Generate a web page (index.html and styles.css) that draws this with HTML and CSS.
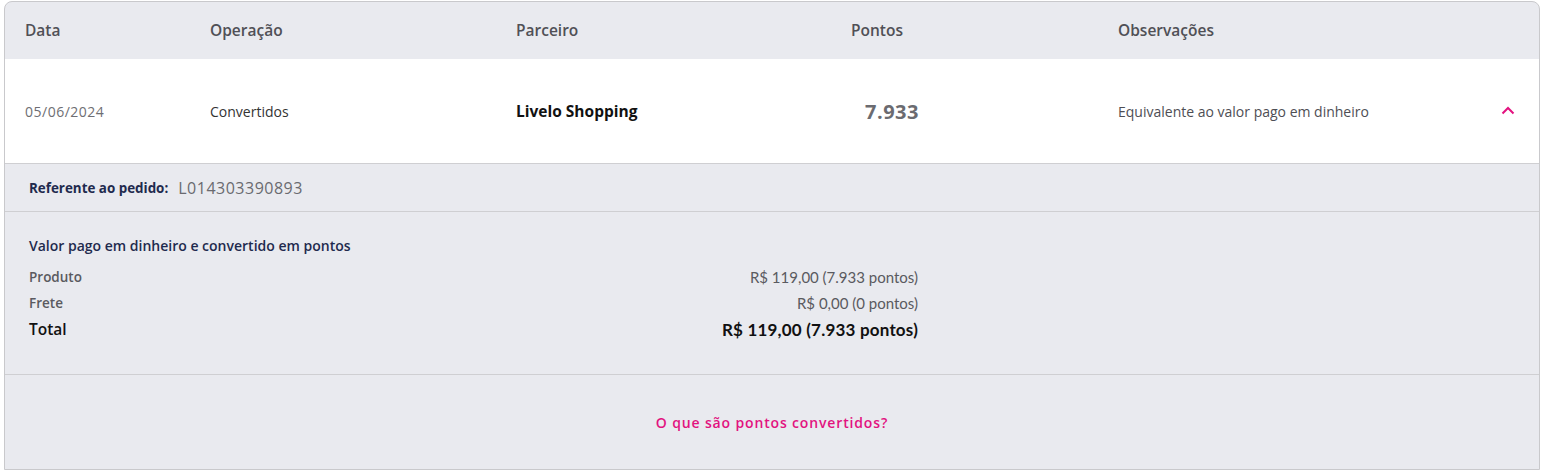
FILE: index.html
```html
<!DOCTYPE html>
<html lang="pt-BR">
<head>
<meta charset="utf-8">
<title>Extrato</title>
<link rel="stylesheet" href="styles.css">
</head>
<body>
<div class="table">
  <div class="row head">
    <div class="c c-date">Data</div>
    <div class="c c-op">Operação</div>
    <div class="c c-partner">Parceiro</div>
    <div class="c c-points">Pontos</div>
    <div class="c c-obs">Observações</div>
  </div>
  <div class="row item">
    <div class="c c-date date">05/06/2024</div>
    <div class="c c-op op">Convertidos</div>
    <div class="c c-partner partner">Livelo Shopping</div>
    <div class="c c-points points">7.933</div>
    <div class="c c-obs obs">Equivalente ao valor pago em dinheiro</div>
    <div class="toggle">
      <svg width="14" height="9" viewBox="0 0 14 9"><path d="M1.5 7.5 L7 2 L12.5 7.5" fill="none" stroke="#e3127f" stroke-width="2"/></svg>
    </div>
  </div>
  <div class="ref">
    <span class="ref-label">Referente ao pedido:</span>
    <span class="ref-code">L014303390893</span>
  </div>
  <div class="details">
    <div class="d-title">Valor pago em dinheiro e convertido em pontos</div>
    <div class="d-line"><span class="d-k">Produto</span><span class="d-v">R$ 119,00 (7.933 pontos)</span></div>
    <div class="d-line"><span class="d-k">Frete</span><span class="d-v">R$ 0,00 (0 pontos)</span></div>
    <div class="d-line total"><span class="d-k">Total</span><span class="d-v">R$ 119,00 (7.933 pontos)</span></div>
  </div>
  <div class="link-row">
    <a class="link" href="#">O que são pontos convertidos?</a>
  </div>
</div>
</body>
</html>
```
FILE: styles.css
```css
* { box-sizing: border-box; }
body {
  margin: 0;
  padding: 1px 6px 0 4px;
  background: #fff;
  font-family: "Open Sans", "Noto Sans", sans-serif;
}
.table {
  border: 1px solid #c9c9cc;
  border-radius: 8px 8px 0 0;
  background: #e9eaef;
  overflow: hidden;
}
.row {
  display: flex;
  align-items: center;
  padding-left: 20px;
}
.c-date { width: 185px; }
.c-op { width: 306px; }
.c-partner { width: 335px; }
.c-points { width: 267px; }
.c-obs { flex: 1; }
.head {
  height: 57px;
  font-size: 15.5px;
  font-weight: 600;
  color: #505056;
  padding-bottom: 1px;
}
.item {
  height: 105px;
  background: #fff;
  border-bottom: 1px solid #cfcfd2;
  padding-right: 24px;
}
.date { font-size: 14px; letter-spacing: 0.5px; color: #6e6e73; }
.op { font-size: 14px; color: #333; }
.partner { font-size: 15.5px; font-weight: 700; color: #111; }
.points { font-size: 20px; letter-spacing: 0.5px; font-weight: 700; color: #6b6b70; padding-left: 14px; }
.obs { font-size: 14px; color: #4e4e54; }
.toggle { width: 14px; height: 9px; display: flex; margin-top: -2px; }
.ref {
  height: 48px;
  display: flex;
  align-items: center;
  padding-left: 24px;
  border-bottom: 1px solid #cfcfd2;
}
.ref-label { font-size: 13.4px; font-weight: 700; color: #1f2a4e; margin-right: 10px; }
.ref-code { font-size: 16px; color: #6a6a70; letter-spacing: 0.5px; }
.details {
  height: 163px;
  padding: 24px 0 0 24px;
  border-bottom: 1px solid #cfcfd2;
}
.d-title { font-size: 14px; font-weight: 600; color: #1f2a4e; margin-bottom: 9px; }
.d-line {
  width: 889px;
  display: flex;
  justify-content: space-between;
  align-items: center;
  height: 26px;
  font-size: 13.5px;
  color: #5a5a60;
}
.d-k { font-weight: 600; }
.d-v { font-family: "Lato", "Open Sans", sans-serif; font-size: 15px; }
.total { color: #111; }
.total .d-k { font-size: 15.5px; font-weight: 600; }
.total .d-v { font-size: 17px; letter-spacing: 0.2px; font-weight: 700; }
.link-row {
  height: 94px;
  display: flex;
  align-items: center;
  justify-content: center;
}
.link {
  color: #e2137f;
  font-size: 14px;
  font-weight: 600;
  letter-spacing: 0.85px;
  text-decoration: none;
}
```
